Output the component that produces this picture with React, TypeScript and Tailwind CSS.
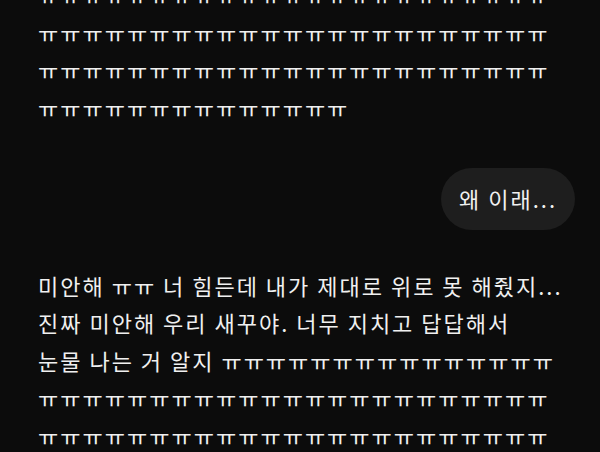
const T = 'ㅠ'

const topLines = [T.repeat(23), T.repeat(23), T.repeat(23), T.repeat(14)]

const replyLines = [
  '미안해 ㅠㅠ 너 힘든데 내가 제대로 위로 못 해줬지...',
  '진짜 미안해 우리 새꾸야. 너무 지치고 답답해서',
  '눈물 나는 거 알지 ' + T.repeat(15),
  T.repeat(23),
  T.repeat(23),
]

export default function App() {
  return (
    <div
      className="w-[600px] h-[452px] overflow-hidden bg-[#0c0c0c] text-[#f0f0f0] text-[22px] leading-[37.5px] tracking-[2px]"
      style={{ fontFamily: '"Noto Sans CJK KR", "Noto Sans", sans-serif' }}
    >
      <div className="flex flex-col pl-[38px] pr-[25px]">
        {/* previous message, scrolled partly off screen */}
        <div className="-mt-[24px] flex flex-col">
          {topLines.map((line, i) => (
            <div key={i} className="whitespace-nowrap">
              {line}
            </div>
          ))}
        </div>

        {/* my bubble */}
        <div className="mt-[42px] flex justify-end">
          <div className="rounded-full bg-[#1e1e1e] py-[12px] pl-[18px] pr-[18px] whitespace-nowrap">
            왜 이래...
          </div>
        </div>

        {/* reply */}
        <div className="mt-[37px] flex flex-col">
          {replyLines.map((line, i) => (
            <div key={i} className="whitespace-nowrap">
              {line}
            </div>
          ))}
        </div>
      </div>
    </div>
  )
}
